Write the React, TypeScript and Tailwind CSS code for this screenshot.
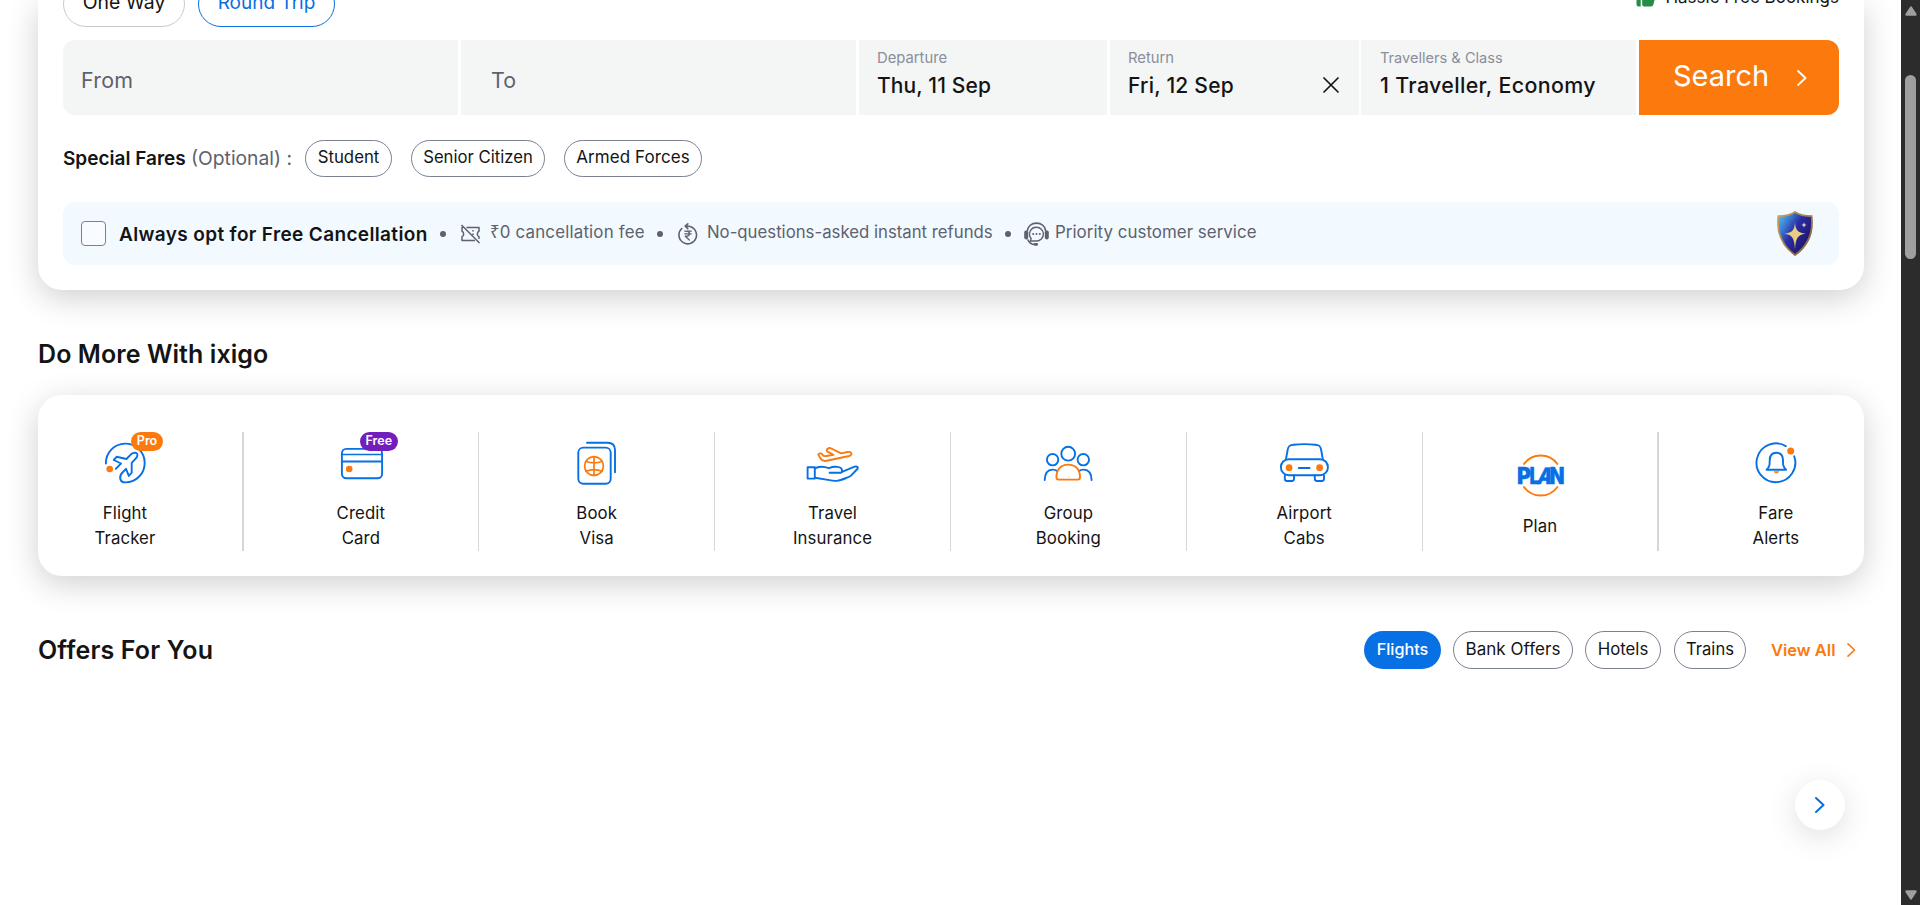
import type { ReactNode } from "react";

const BLUE = "#0770e4";
const ORANGE = "#fc790d";

function Chevron({ className, width = 1.8 }: { className: string; width?: number }) {
  return (
    <svg viewBox="0 0 10 16" fill="none" stroke="currentColor" strokeWidth={width} className={className}>
      <path d="M1 1l7.5 7L1 15" strokeLinecap="round" strokeLinejoin="round" />
    </svg>
  );
}

function IconBase({ children }: { children: ReactNode }) {
  return (
    <svg width="60" height="62" viewBox="0 0 60 62" fill="none" stroke={BLUE} strokeWidth="1.9" strokeLinejoin="round" strokeLinecap="round">
      {children}
    </svg>
  );
}

const flightIcon = (
  <IconBase>
    <path d="M10.9 31.5A19.4 19.4 0 1 1 30.5 50.4C24.6 50.6 23.8 44.6 27 41L31 36.8L33.8 43.9L36.7 40.7V30.9L41.1 26.2C42.6 24.6 42.8 21.8 41.8 21.2C40.6 20.4 37.6 20.8 36.2 22.2L31.4 27L21.6 24.8L18.8 28L26 31.5L20.7 36.8" />
    <circle cx="14.7" cy="37" r="3.3" fill={ORANGE} stroke="none" />
  </IconBase>
);

const creditIcon = (
  <IconBase>
    <rect x="10.9" y="16.9" width="40.2" height="29.4" rx="4.5" />
    <path d="M11 22.6H51" strokeWidth="1.5" />
    <path d="M11 29.5H51" strokeWidth="1.8" />
    <circle cx="18.2" cy="37" r="3.3" fill={ORANGE} stroke="none" />
  </IconBase>
);

const visaIcon = (
  <IconBase>
    <rect x="11.3" y="15.6" width="32.4" height="36.2" rx="5" />
    <path d="M20 10.8H40.5C45.5 10.8 48 13.6 48 18V40.2" />
    <g stroke={ORANGE} strokeWidth="1.7">
      <circle cx="27" cy="34" r="9.4" />
      <path d="M27 24.6V43.4M18.9 29.3Q27 32.6 35.1 29.3M18.9 39.3Q27 35.8 35.1 39.3" />
    </g>
  </IconBase>
);

const insuranceIcon = (
  <IconBase>
    <path d="M4.6 35.2H11.8V46.6H4.6Z" />
    <path d="M11.8 36.4C16 33.8 20 34.2 26 36.2C31 34 38.6 34.3 39 38.2C39.1 39.6 38.6 40.7 37.4 40.7H26.6" />
    <path d="M39 39.8L51.6 34.7C54 33.9 55.8 35.3 54.3 37L48 43.6C46.6 44.9 45 45.4 43.2 46C34.6 49.5 32.4 49.4 25 47.9L11.8 45.8" />
    <path stroke={ORANGE} d="M15.3 22.6C15.4 21.2 18.2 20.8 19.3 22.4C20.3 24 21.6 24.4 23.4 24L30.4 22.8L24.1 19.4C23 18.4 24.4 15.6 27.2 16L38.2 21.4L44.6 20C49.2 19.4 49.6 23.2 46.2 24L22.4 29C20 29.4 18.8 28.2 17.6 26.6Z" />
  </IconBase>
);

const groupIcon = (
  <IconBase>
    <circle cx="30.2" cy="21.7" r="6.9" />
    <circle cx="14.6" cy="27.7" r="5.7" />
    <circle cx="45.3" cy="27.7" r="5.7" />
    <path d="M6.7 48C6.9 41 9.6 37.8 14.4 37.6C16.4 37.5 18 38 19.4 39.2M53.6 48C53.4 41 50.7 37.8 45.9 37.6C43.9 37.5 42.3 38 40.9 39.2" />
    <path stroke={ORANGE} d="M20.7 47.6Q18.4 47.6 18.4 45C18.4 37.4 23 32.6 30.2 32.6S42 37.4 42 45Q42 47.6 39.8 47.6Z" />
  </IconBase>
);

const cabIcon = (
  <IconBase>
    <rect x="6.9" y="27.2" width="47" height="16" rx="7.8" />
    <path d="M12 27L13.8 17.2C14.5 13.7 16 13 19.5 12.7Q30.4 11.6 41.3 12.7C44.8 13 46.3 13.7 47 17.2L48.8 27" />
    <path d="M10.8 43.3V46.8Q10.8 49 13 49H17.8Q20 49 20 46.8V43.3M40.8 43.3V46.8Q40.8 49 43 49H47.8Q50 49 50 46.8V43.3M24.8 36H35.6" />
    <circle cx="15.1" cy="35.7" r="3.4" fill={ORANGE} stroke="none" />
    <circle cx="45.6" cy="35.7" r="3.4" fill={ORANGE} stroke="none" />
  </IconBase>
);

const planIcon = (
  <IconBase>
    <path stroke={ORANGE} d="M14 19A20.6 20.6 0 0 1 47.4 19M14 42A20.6 20.6 0 0 0 47.4 42" />
    <g fontFamily="Inter, sans-serif" fontWeight="900" fontSize="22.8" fill={BLUE} strokeWidth="0.3" strokeLinejoin="miter">
      <text x="7" y="39.2" textLength="14" lengthAdjust="spacingAndGlyphs">P</text>
      <text x="19.6" y="39.2" textLength="10" lengthAdjust="spacingAndGlyphs">L</text>
      <text x="36" y="39.2" textLength="14.5" lengthAdjust="spacingAndGlyphs" transform="skewX(-14)">A</text>
      <text x="39.4" y="39.2" textLength="15" lengthAdjust="spacingAndGlyphs">N</text>
    </g>
  </IconBase>
);

const bellIcon = (
  <IconBase>
    <path d="M39.8 14.1A19.4 19.4 0 1 0 48.2 24.3" />
    <path d="M20.6 37.7C23.6 35.2 23.7 33 23.7 28.4C23.7 23.2 26 20.8 30.3 20.8S37 23.2 37 28.4C37 33 37.1 35.2 40.1 37.7Z" />
    <path d="M27.5 39.2H33.3A3 2.6 0 0 1 27.5 39.2Z" fill={ORANGE} stroke="none" />
    <circle cx="44.7" cy="19" r="3.5" fill={ORANGE} stroke="none" />
  </IconBase>
);

type Tile = { label: string[]; icon: ReactNode; badge?: ReactNode };

const badgeClass = "absolute top-0 h-[19px] rounded-full text-[12.5px] font-semibold leading-[18px] text-white text-center";

const tiles: Tile[] = [
  { label: ["Flight", "Tracker"], icon: flightIcon, badge: <span className={`${badgeClass} left-[49px] w-[32px] bg-[#fc790d]`}>Pro</span> },
  { label: ["Credit", "Card"], icon: creditIcon, badge: <span className={`${badgeClass} left-[42px] w-[38px] bg-[#721ebc]`}>Free</span> },
  { label: ["Book", "Visa"], icon: visaIcon },
  { label: ["Travel", "Insurance"], icon: insuranceIcon },
  { label: ["Group", "Booking"], icon: groupIcon },
  { label: ["Airport", "Cabs"], icon: cabIcon },
  { label: ["Plan"], icon: planIcon },
  { label: ["Fare", "Alerts"], icon: bellIcon },
];

function Dot({ className }: { className: string }) {
  return <span className={`size-[6px] shrink-0 rounded-full bg-[#5e616e] ${className}`} />;
}

function Shield() {
  return (
    <svg width="36" height="45" viewBox="0 0 36 45" className="ml-auto mr-[26px]">
      <defs>
        <linearGradient id="shieldFill" x1="0" y1="0.1" x2="0.9" y2="0.8">
          <stop offset="0" stopColor="#5db9ee" />
          <stop offset="0.25" stopColor="#3b7dd2" />
          <stop offset="0.5" stopColor="#2a2da3" />
          <stop offset="1" stopColor="#1d1464" />
        </linearGradient>
        <linearGradient id="shieldEdge" x1="0" y1="0" x2="1" y2="1">
          <stop offset="0" stopColor="#c9a75c" />
          <stop offset="1" stopColor="#7d5a3a" />
        </linearGradient>
      </defs>
      <path d="M18 .9C22.5 3.8 29 5 34.6 5.2C35.8 15 35.4 31.5 18 44C.6 31.5.2 15 1.4 5.2C7 5 13.5 3.8 18 .9Z" fill="url(#shieldFill)" stroke="url(#shieldEdge)" strokeWidth="1.8" />
      <path d="M18 11.5C18.6 19 20.5 21.6 28.5 22.8C20.5 24 18.8 27 18 38.5C17.2 27 15.5 24 7.5 22.8C15.5 21.6 17.4 19 18 11.5Z" fill="#e8cd82" />
      <path d="M27 11.2L27.7 13.2L29.6 14L27.7 14.8L27 16.8L26.3 14.8L24.4 14L26.3 13.2Z" fill="#e8dcb4" />
    </svg>
  );
}

function SearchCard() {
  return (
    <section className="flex h-[290px] flex-col rounded-b-[24px] bg-white pl-[25px] pr-[25px] shadow-[0_8px_32px_rgba(0,0,0,0.19)]">
      <div className="flex h-[27px] items-end">
        <button className="h-[46px] w-[122px] shrink-0 rounded-full border border-[#c9cad1] pb-[3px] text-[19.4px]">One Way</button>
        <button className="ml-[13px] h-[46px] w-[137px] shrink-0 rounded-full border border-[#0770e4] pb-[2px] text-[19px] text-[#0770e4]">Round Trip</button>
        <div className="ml-auto flex h-[60px] items-center">
          <svg width="20" height="20" viewBox="0 0 20 20" fill="#238c46" className="mr-[9px]">
            <path d="M.5 8.5h4.2v11H2.5a2 2 0 0 1-2-2zM6.2 8.2L10.5.8c1.8 0 2.8 1.4 2.4 3L12.2 7h5.3c1.5 0 2.4 1.2 2 2.6l-2.2 8.2a2.3 2.3 0 0 1-2.2 1.7H8.2a2 2 0 0 1-2-2z" />
          </svg>
          <span className="pt-[2px] text-[17px]">Hassle Free Bookings</span>
        </div>
      </div>

      <div className="mt-[13px] flex h-[75px] w-[1776px] overflow-hidden rounded-[12px]">
        <div className="flex w-[395px] items-center bg-[#f4f6f5] pl-[18px] pt-[5px] text-[21.4px] tracking-[0.01em] text-[#5e616e]">From</div>
        <div className="ml-[3px] flex w-[395px] items-center bg-[#f4f6f5] pl-[30px] pt-[5px] text-[21.4px] text-[#5e616e]">To</div>
        <div className="ml-[3px] w-[248px] bg-[#f4f6f5] pl-[18px] pt-[8px]">
          <div className="text-[14.8px] leading-5 text-[#8b8d9b]">Departure</div>
          <div className="mt-[4px] text-[21px] font-medium leading-7 tracking-[0.006em]">Thu, 11 Sep</div>
        </div>
        <div className="ml-[3px] flex w-[249px] justify-between bg-[#f4f6f5] pl-[18px] pr-[20px] pt-[8px]">
          <div>
            <div className="text-[14.8px] leading-5 text-[#8b8d9b]">Return</div>
            <div className="mt-[4px] text-[21px] font-medium leading-7 tracking-[0.011em]">Fri, 12 Sep</div>
          </div>
          <svg width="16" height="16" viewBox="0 0 16 16" fill="none" stroke="#141414" strokeWidth="1.7" strokeLinecap="round" className="mt-[29px]">
            <path d="M1 1l14 14M15 1L1 15" />
          </svg>
        </div>
        <div className="ml-[2px] w-[275px] bg-[#f4f6f5] pl-[19px] pt-[8px]">
          <div className="text-[14.6px] leading-5 text-[#8b8d9b]">Travellers &amp; Class</div>
          <div className="mt-[3px] whitespace-nowrap text-[21.4px] font-medium leading-7 tracking-[0.016em]">1 Traveller, Economy</div>
        </div>
        <button className="ml-[3px] flex w-[200px] items-center bg-[#fc790d] pl-[34px] text-white">
          <span className="w-[124px] pb-[3px] text-left text-[29px]">Search</span>
          <Chevron className="h-[16px] w-[10px]" />
        </button>
      </div>

      <div className="mt-[25px] flex h-[37px] items-center">
        <span className="w-[128px] whitespace-nowrap pt-[2px] text-[19px] font-semibold">Special Fares</span>
        <span className="w-[114px] whitespace-nowrap text-[19.3px] text-[#5e616e]">(Optional) :</span>
        <button className="h-[37px] w-[87px] rounded-full border border-[#7b7f92] pb-[1px] text-[16.8px]">Student</button>
        <button className="ml-[19px] h-[37px] w-[134px] whitespace-nowrap rounded-full border border-[#7b7f92] pb-[1px] text-[16.7px]">Senior Citizen</button>
        <button className="ml-[19px] h-[37px] w-[138px] whitespace-nowrap rounded-full border border-[#7b7f92] pb-[1px] text-[17px] tracking-[0.005em]">Armed Forces</button>
      </div>

      <div className="mt-[25px] flex h-[63px] w-[1776px] items-center rounded-[12px] bg-[#f2f9ff] pl-[18px]">
        <span className="size-[25px] shrink-0 rounded-[4px] border border-[#7b7f92] bg-[#f8fbff]" />
        <span className="ml-[13px] w-[319px] shrink-0 whitespace-nowrap pt-[3px] text-[19px] font-semibold tracking-[0.019em]">Always opt for Free Cancellation</span>
        <Dot className="mr-[14px] ml-[2px]" />
        <svg width="21" height="20" viewBox="0 0 21 20" fill="none" stroke="#5e616e" strokeWidth="1.5" strokeLinejoin="round" className="mr-[9px] shrink-0">
          <path d="M6.5 3.4H19V7.2C16.8 7.8 16.8 12 19 12.8V15M15 16.4H2V12.8C4.2 12 4.2 7.8 2 7.2V3.4H3M1.5 1L19.5 19M13 6v1.6M13 9.4V11" />
        </svg>
        <span className="w-[167px] shrink-0 whitespace-nowrap pb-[3px] text-[16.9px] tracking-[0.01em] text-[#5e616e]">
          <span className="font-['Noto_Sans']">₹</span>0 cancellation fee
        </span>
        <Dot className="mr-[15px]" />
        <svg width="20" height="22" viewBox="0 0 20 22" fill="none" stroke="#5e616e" strokeWidth="1.6" strokeLinecap="round" strokeLinejoin="round" className="mr-[9px] shrink-0">
          <path d="M3.8 5.5A8.8 8.8 0 1 0 10 3.2H7.4M9.8.8L7.2 3.2L9.8 5.6" />
          <path d="M6.8 8.2h6.4M6.8 10.8h6.4M8 8.2c4.6 0 4.6 5 0 5h-.7l4 3.8" strokeWidth="1.3" />
        </svg>
        <span className="w-[298px] shrink-0 whitespace-nowrap pb-[1px] text-[16.75px] text-[#5e616e]">No-questions-asked instant refunds</span>
        <Dot className="mr-[13px]" />
        <svg width="25" height="24" viewBox="0 0 25 24" fill="none" stroke="#5e616e" className="mr-[6px] shrink-0">
          <path d="M3.2 9C4 4 8 1.2 12.5 1.2S21 4 21.8 9" strokeWidth="1.7" />
          <path d="M12.5 5.2a6.9 6.9 0 1 1 0 13.8H6.2l1-2.4A6.9 6.9 0 0 1 12.5 5.2Z" strokeWidth="1.4" />
          <path d="M3.6 17.4C5 20.4 7 22.2 10 22.5" strokeWidth="1.4" />
          <g fill="#5e616e" stroke="none">
            <rect x="0.2" y="8.4" width="4" height="9" rx="1.8" />
            <rect x="20.8" y="8.4" width="4" height="9" rx="1.8" />
            <rect x="9.6" y="21" width="4.4" height="2.8" rx="1.3" />
            <circle cx="9.2" cy="12" r="1" />
            <circle cx="12.5" cy="12" r="1" />
            <circle cx="15.8" cy="12" r="1" />
          </g>
        </svg>
        <span className="shrink-0 whitespace-nowrap pb-[1px] text-[16.9px] tracking-[0.002em] text-[#5e616e]">Priority customer service</span>
        <Shield />
      </div>
    </section>
  );
}

function DoMore() {
  return (
    <section>
      <h2 className="mt-[46px] h-[36px] text-[25px] font-semibold leading-9 tracking-[0.003em]">Do More With ixigo</h2>
      <div className="mt-[23px] flex h-[181px] items-center justify-between rounded-[24px] bg-white pl-[44px] pr-[45px] pt-[12px] shadow-[0_8px_32px_rgba(0,0,0,0.19)]">
        {tiles.flatMap((tile, i) => {
          const item = (
            <div key={tile.label[0]} className="relative flex h-[119px] w-[86px] flex-col items-center justify-center">
              {tile.icon}
              {tile.badge}
              <div className="mt-[7px] flex flex-col items-center text-[16.8px] leading-[25px] tracking-[0.006em]">
                {tile.label.map((line) => (
                  <span key={line}>{line}</span>
                ))}
              </div>
            </div>
          );
          if (i === 0) return [item];
          const wide = i === 1 || i === 7;
          return [
            <div key={`line-${i}`} className={i < 4 ? "flex h-[119px] w-[2px]" : "flex h-[119px] w-[2px] justify-end"}>
              <div className={wide ? "w-[2px] bg-[#d5d6dc]" : "w-px bg-[#d5d6dc]"} />
            </div>,
            item,
          ];
        })}
      </div>
    </section>
  );
}

function Offers() {
  const pill = "h-[38px] rounded-full border border-[#7b7f92] pb-[1px]";
  return (
    <section>
      <div className="mt-[55px] flex h-[38px] items-center">
        <h2 className="mr-auto pt-[2px] text-[25px] font-semibold tracking-[0.006em]">Offers For You</h2>
        <button className="h-[38px] w-[77px] rounded-full bg-[#0770e4] pb-[2px] text-[16.2px] font-medium text-white">Flights</button>
        <button className={`${pill} ml-[12px] w-[120px] text-[17px] tracking-[0.002em]`}>Bank Offers</button>
        <button className={`${pill} ml-[12px] w-[76px] text-[16.8px]`}>Hotels</button>
        <button className={`${pill} ml-[13px] mr-[25px] w-[72px] text-[16.6px]`}>Trains</button>
        <a className="w-[76px] text-[16.5px] font-semibold text-[#fc790d]">View All</a>
        <Chevron className="mr-[8px] h-[14px] w-[9px] text-[#fc790d]" />
      </div>
      <div className="mt-[111px] flex justify-end pr-[19px]">
        <button className="flex size-[50px] items-center justify-center rounded-full bg-white text-[#0770e4] shadow-[0_7px_29px_rgba(100,100,111,0.2)]">
          <Chevron className="h-[16px] w-[10px]" width={2} />
        </button>
      </div>
    </section>
  );
}

function ScrollRail() {
  return (
    <div className="flex w-[19px] shrink-0 flex-col items-center bg-[#2c2c2c]">
      <svg width="12" height="10" viewBox="0 0 12 10" fill="#9f9f9f" className="mt-[6px]">
        <path d="M6 .3Q6.6.3 7 1L11.6 8Q12 9.6 10.6 9.7H1.4Q0 9.6.4 8L5 1Q5.4.3 6 .3Z" />
      </svg>
      <div className="mt-[59px] h-[184px] w-[11px] rounded-full bg-[#9f9f9f]" />
      <svg width="12" height="10" viewBox="0 0 12 10" fill="#9f9f9f" className="mb-[5px] mt-auto">
        <path d="M6 9.7Q5.4 9.7 5 9L.4 2Q0 .4 1.4.3H10.6Q12 .4 11.6 2L7 9Q6.6 9.7 6 9.7Z" />
      </svg>
    </div>
  );
}

export default function App() {
  return (
    <div className="flex h-[905px] w-[1920px] overflow-hidden bg-white font-[Inter,sans-serif] text-[#141414]">
      <main className="w-[1901px] overflow-hidden pl-[38px] pr-[37px]">
        <SearchCard />
        <DoMore />
        <Offers />
      </main>
      <ScrollRail />
    </div>
  );
}
